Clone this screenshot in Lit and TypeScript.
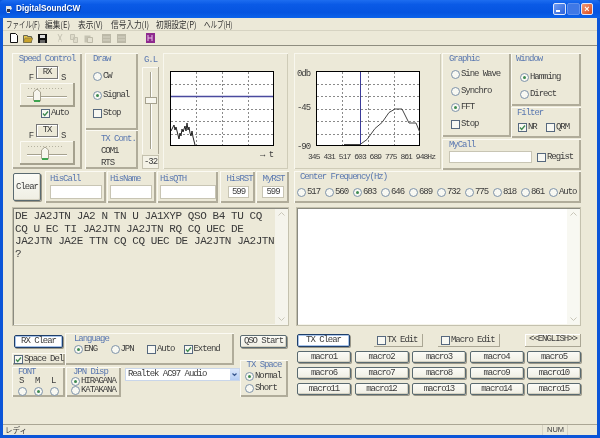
import { LitElement, html, css, svg } from "lit";
import { customElement } from "lit/decorators.js";

@customElement("app-root")
export class AppRoot extends LitElement {
  static styles = css`
    :host { display: block; width: 600px; height: 438px; overflow: hidden; }
    * { box-sizing: border-box; }
    .win { width: 600px; height: 438px; display: flex; flex-direction: column; background: #0b55d8; padding: 0 3px 3px; font: 9px/9px "Liberation Mono", monospace; letter-spacing: -1.05px; color: #3c3c3c; filter: blur(.3px); }
    .title { height: 18px; flex: none; margin: 0 -3px; padding: 0 5px; display: flex; align-items: center; border-radius: 4px 4px 0 0; color: #fff; font: bold 8.2px/18px "Liberation Sans", sans-serif; letter-spacing: 0; background: linear-gradient(#1d6df0, #0a5ae6 25%, #0554e0 70%, #0c63ea); }
    .title svg { margin-right: 3px; }
    .title .name { flex: 1; text-shadow: 1px 1px #0a3a9a; }
    .wb { width: 13px; height: 12px; margin-left: 1px; border-radius: 2px; border: 1px solid #dfe8fb; background: linear-gradient(135deg, #6f9cf2, #2a62dc); position: relative; }
    .wb.dim { background: #3f78e6; border-color: #5f90ee; }
    .wb.min::after { content: ""; position: absolute; left: 2px; bottom: 2px; width: 4px; height: 2px; background: #fff; }
    .wb.close { width: 12px; margin-right: 2px; background: linear-gradient(135deg, #f09a78, #dc4a1c); color: #fff; font: bold 9px/10px "Liberation Sans", sans-serif; text-align: center; letter-spacing: 0; }
    .menu { height: 13px; flex: none; background: #ece9d8; display: flex; padding: 1px 0 0 3px; border-bottom: 1px solid #d6d3c2; font: 9px/11px "Noto Sans CJK JP", sans-serif; letter-spacing: 0; color: #333; white-space: nowrap; }
    .menu span { transform: scaleX(.85); transform-origin: left center; }
    .menu span.kana { transform: scaleX(.72); }
    .mi1 { width: 39px; } .mi2 { width: 33px; } .mi3 { width: 33px; } .mi4 { width: 45px; } .mi5 { width: 48px; }
    .tools { height: 15px; flex: none; background: #ece9d8; border-bottom: 1px solid #8f8d80; display: flex; align-items: center; padding-left: 7px; }
    .tools svg { flex: none; display: block; }
    .g1 { margin-left: 5px; } .g2 { margin-left: 9px; } .g3 { margin-left: 6px; } .g4 { margin-left: 20px; }
    .client { flex: 1; background: #ece9d8; padding: 7px 0 0 9px; display: flex; gap: 5px; min-height: 0; }
    .col { display: flex; flex-direction: column; }
    .left { width: 277px; } .right { width: 287px; }
    .row { display: flex; }
    .p { background: #ece9d8; box-shadow: inset 1px 1px #fbfaf3, inset -2px -2px #b0ac9a; flex: none; }
    .t { color: #5a78b0; display: block; line-height: 9px; }
    .tc { text-align: center; }
    .top { height: 116px; }
    .speed { width: 70px; padding-top: 2px; }
    .lbl { display: flex; justify-content: center; align-items: flex-end; height: 13px; margin-top: 2px; }
    .lbl span { margin-bottom: -4px; font-size: 9px; }
    .lbl b { font-weight: normal; width: 22px; height: 13px; margin: 0 3px; line-height: 11px; text-align: center; border: 1px solid #777; box-shadow: inset 1px 1px #fff, 1px 1px #fff; }
    .slider { display: block; margin: 4px 0 0 8px; }
    .auto { margin: 2px 0 0 29px; }
    .lbl2 { margin-top: 6px; }
    .drawcol { width: 53px; margin-left: 3px; }
    .draw { height: 77px; padding: 2px 0 0 8px; }
    .draw .t { margin-bottom: 8px; }
    .draw .opt { margin-bottom: 9.5px; }
    .txc { height: 39px; padding: 2px 0 0 8px; }
    .txc span { display: block; margin: 3px 0 0 8px; }
    .gl { width: 17px; margin-left: 4px; display: flex; flex-direction: column; }
    .gl .t { text-align: center; margin: 3px 0 2px; }
    .gl svg { display: block; }
    .glv { width: 17px; height: 14px; margin-top: 1px; background: #f4f2e6; border: 1px solid #c4c1ae; line-height: 12px; text-align: center; }
    .plotp { width: 125px; margin-left: 4px; padding: 18px 0 0 7px; box-shadow: inset 1px 1px #f8f7ee, inset -1px -1px #cfccb8; }
    .plotp svg, .fftp svg { display: block; }
    .arrow { text-align: right; padding-right: 15px; margin-top: 5px; font-size: 9px; }
    .info { height: 32px; margin-top: 2px; }
    .clearwrap { width: 32px; padding: 2px 0 0 1px; box-shadow: none; }
    .clear { width: 28px; height: 28px; display: flex; align-items: center; justify-content: center; }
    .btn { border: 1px solid #5a6a70; border-radius: 2px; background: linear-gradient(#fbfbf6, #efeee3); box-shadow: 1px 1px #9a9788, inset -1px -1px #d5d2c2; color: #3c3c3c; text-align: center; line-height: 10px; flex: none; }
    .focus { border-color: #1f3f6a; background: #fff; box-shadow: inset 0 0 0 1px #a8c4ea, 1px 1px #9a9788; }
    .ib { padding: 2px 0 0 6px; }
    .ib .t { margin: 2px 0 1px; white-space: nowrap; }
    .ib .tc { margin-left: -4px; }
    .in { background: #fff; border: 1px solid #c8c5b4; display: block; }
    .hc { width: 61px; margin-left: 1px; padding-left: 5px; } .hc .in { width: 52px; height: 14px; }
    .hn { width: 49px; margin-left: 1px; padding-left: 3px; } .hn .in { width: 42px; height: 14px; }
    .hq { width: 61px; margin-left: 1px; padding-left: 3px; } .hq .in { width: 56px; height: 14px; }
    .hr { width: 35px; margin-left: 2px; padding-left: 8px; } .hr .in { width: 21px; height: 12px; margin-top: 2px; text-align: center; line-height: 10px; }
    .mr { width: 33px; margin-left: 1px; padding-left: 6px; } .mr .in { width: 22px; height: 12px; margin-top: 2px; text-align: center; line-height: 10px; }
    .box { height: 119px; margin-top: 4px; border: 1px solid #c4c1ae; display: flex; flex: none; box-shadow: inset 1px 1px #8a8a80, inset -1px -1px #f6f5ec; padding: 1px; }
    .box.l { background: #ece9d8; }
    .box.r { background: #fff; margin-left: 2px; width: 285px; }
    .txt { flex: 1; padding: 1px 0 0 1px; font-size: 11px; line-height: 12.6px; letter-spacing: -.43px; color: #3a3a3a; white-space: pre; }
    .sb { width: 12px; display: flex; flex-direction: column; justify-content: space-between; align-items: center; padding: 3px 0; }
    .box.l .sb { background: #f5f4ec; } .box.r .sb { background: #f8f8f2; }
    .bot { margin-top: 7px; display: flex; }
    .bl { width: 228px; }
    .blt { display: flex; height: 32px; }
    .a { width: 53px; display: flex; flex-direction: column; }
    .rx { width: 49px; height: 13px; margin: 2px 0 0 2px; }
    .sd { height: 12px; margin-top: 5px; padding: 2px 0 0 2px; }
    .lang { width: 169px; padding: 1px 0 0 9px; }
    .lang .t { margin: 1px 0 1px; }
    .lang .row .opt { width: 36.5px; }
    .blb { display: flex; margin-top: 2px; }
    .font { width: 53px; height: 30px; padding: 1px 0 0 6px; }
    .fg { display: grid; grid-template-columns: repeat(3, 16px); justify-items: start; }
    .fg span { padding-left: 1px; line-height: 8px; }
    .fg .radio { margin-top: 2px; }
    .jp { width: 55px; height: 30px; margin-left: 1px; padding: 1px 0 0 5px; }
    .jp .t { padding-left: 2px; }
    .combo { width: 116px; height: 13px; margin: 1px 0 0 4px; background: #fff; border: 1px solid #c9d6ea; display: flex; justify-content: space-between; padding-left: 2px; line-height: 11px; }
    .combo i { width: 9px; background: linear-gradient(#dbe7fb, #b4cdf4); display: flex; align-items: center; justify-content: center; }
    .br { width: 48px; }
    .qso { width: 47px; height: 13px; margin-top: 2px; }
    .txs { height: 37px; margin-top: 12px; padding: 1px 0 0 5px; }
    .txs .t { text-align: center; margin: 0 0 2px -5px; }
    .txs .opt { margin-bottom: 3px; }
    .fftp { width: 147px; padding-top: 18px; box-shadow: inset 1px 1px #f8f7ee, inset -1px -1px #cfccb8; }
    .yax { width: 22px; margin-top: -1px; padding-left: 3px; display: flex; flex-direction: column; }
    .yax span:nth-child(2) { margin-top: 25px; }
    .yax span:nth-child(3) { margin-top: 30px; }
    .xax { margin: 0 0 0 14px; font-size: 8px; letter-spacing: -.95px; white-space: nowrap; }
    .cl { width: 139px; margin-left: 1px; }
    .gr { width: 69px; height: 84px; padding: 2px 0 0 7px; }
    .gr .t { margin-bottom: 6px; }
    .gr .opt { margin: 0 0 7.6px 2px; }
    .wincol { width: 70px; }
    .w { height: 53px; padding: 2px 0 0 5px; }
    .w .t { margin-bottom: 9px; }
    .w .opt { margin: 0 0 8px 4px; }
    .fl { height: 31px; margin-top: 1px; padding: 2px 0 0 6px; }
    .fl .row { margin-top: 5px; }
    .fl .opt { width: 27px; margin-left: 1px; }
    .mc { height: 31px; margin-top: 1px; padding: 2px 0 0 7px; }
    .mc .t { margin-bottom: -1px; }
    .mc .row { align-items: center; }
    .mc .in { width: 83px; height: 12px; margin: 2px 5px 0 0; }
    .mc .opt { margin-top: 3px; }
    .cf { height: 32px; margin-top: 2px; padding: 2px 0 0 3px; width: 287px; }
    .cf .t { margin: 0 0 6px 3px; }
    .cf .opt { width: 28px; }
    .rb1 { margin: 8px 0 0 3px; height: 12px; align-items: center; }
    .tx { width: 53px; height: 13px; }
    .te { width: 49px; height: 13px; margin-left: 24px; padding-left: 3px; display: flex; align-items: center; box-shadow: inset -1px -1px #aaa694; }
    .me { width: 62px; height: 13px; margin-left: 15px; padding-left: 3px; display: flex; align-items: center; box-shadow: inset -1px -1px #aaa694; }
    .en { width: 56px; height: 13px; margin-left: 25px; line-height: 11px; text-align: center; box-shadow: inset -1px -1px #aaa694, inset 1px 1px #fff; }
    .macros { display: grid; grid-template-columns: repeat(5, 1fr); column-gap: 3.5px; row-gap: 4px; margin: 5px 0 0 3px; width: 284px; }
    .macros .btn { height: 12px; }
    .status { height: 11px; flex: none; margin-top: auto; background: #ece9d8; border-top: 1px solid #aaa694; display: flex; font: 7.5px/10px "Noto Sans CJK JP", sans-serif; letter-spacing: 0; padding-left: 2px; }
    .status .rd { width: 537px; }
    .status .c { width: 25px; border-left: 1px solid #d5d2c2; font: 7.5px/10px "Liberation Sans", sans-serif; padding-left: 4px; }
    .status .d { width: 20px; border-left: 1px solid #d5d2c2; }
    .clientwrap { flex: 1; display: flex; flex-direction: column; background: #ece9d8; min-height: 0; }
    .opt { display: flex; align-items: center; white-space: nowrap; height: 9px; }
    .radio { flex: none; display: inline-block; width: 9px; height: 9px; border-radius: 50%; border: 1px solid #7d92a8; background: #f8f8f2; margin-right: 1px; position: relative; }
    .radio.on::after { content: ""; position: absolute; left: 2px; top: 2px; width: 3px; height: 3px; border-radius: 50%; background: #3e8a50; }
    .chk { flex: none; display: inline-block; width: 9px; height: 9px; border: 1px solid #56687e; background: #f8f8f2; margin-right: 1px; position: relative; }
    .chk svg { position: absolute; left: 0; top: 0; }
    .arr { display: block; }
  `;

  private radio(label: string, on = false) {
    return html`<span class="opt"><i class="radio ${on ? "on" : ""}"></i>${label}</span>`;
  }
  private check(label: string, on = false) {
    return html`<span class="opt"><i class="chk">${on ? html`<svg width="7" height="7" viewBox="0 0 7 7"><path d="M1 3.500l1.700 2L6 1.500" fill="none" stroke="#3e8a50" stroke-width="1.3"/></svg>` : ""}</i>${label}</span>`;
  }
  private slider(x: number) {
    return html`<svg class="slider" width="55" height="24" viewBox="0 0 55 24">
      <rect width="55" height="24" fill="#ece9d8"/>
      <path d="M.5 23.500V.5H54" stroke="#fbfaf3" fill="none"/>
      <path d="M54 0V23H0" stroke="#a5a18e" stroke-width="2" fill="none"/>
      <path d="M8 5.500H44" stroke="#b5b2a0" stroke-dasharray="1 2"/>
      <path d="M7 13.500H47" stroke="#a5a18e"/><path d="M7 14.500H47" stroke="#fff"/>
      <path d="M${x - 3.5} 17.500V9l3.500-3 3.500 3v9z" fill="#f7f6ee" stroke="#a5a18e"/>
      <rect x="${x - 3}" y="17" width="6" height="2" fill="#3ea34f"/>
    </svg>`;
  }
  private grid(w: number, h: number) {
    const v = [0.25, 0.5, 0.75].map((f) => Math.round(w * f) + 0.5);
    const r = [1, 2, 3, 4, 5].map((i) => Math.round((h * i) / 6) + 0.5);
    return svg`
      <rect x=".5" y=".5" width="${w - 1}" height="${h - 1}" fill="#fff" stroke="#000"/>
      ${v.map((x) => svg`<path d="M${x} 1V${h - 1}" stroke="#8a8a8a" stroke-dasharray="2 2"/>`)}
      ${r.map((y) => svg`<path d="M1 ${y}H${w - 1}" stroke="#8a8a8a" stroke-dasharray="2 2"/>`)}`;
  }
  private scroll() {
    return html`<div class="sb">
      <svg class="arr" width="7" height="4" viewBox="0 0 7 4"><path d="M.5 3.500l3-3 3 3" fill="none" stroke="#c9c6b8"/></svg>
      <svg class="arr" width="7" height="4" viewBox="0 0 7 4"><path d="M.5.5l3 3 3-3" fill="none" stroke="#c9c6b8"/></svg>
    </div>`;
  }

  render() {
    const freqs = ["517", "560", "603", "646", "689", "732", "775", "818", "861", "Auto"];
    const macros = Array.from({ length: 15 }, (_, i) => `macro${i + 1}`);
    const text = "DE JA2JTN JA2 N TN U JA1XYP QSO B4 TU CQ\nCQ U EC TI JA2JTN JA2JTN RQ CQ UEC DE\nJA2JTN JA2E TTN CQ CQ UEC DE JA2JTN JA2JTN\n?";
    return html`<div class="win">
      <div class="title">
        <svg width="8" height="9" viewBox="0 0 8 9"><path d="M1 1h5l1 3-2 1v3H2L1 5z" fill="#dfe4ea"/><path d="M2 4h3v3H2z" fill="#334"/></svg>
        <span class="name">DigitalSoundCW</span>
        <div class="wb min"></div><div class="wb dim"></div><div class="wb close">×</div>
      </div>
      <div class="menu">
        <span class="mi1 kana">ファイル(F)</span><span class="mi2">編集(E)</span><span class="mi3">表示(V)</span><span class="mi4">信号入力(I)</span><span class="mi5">初期設定(P)</span><span class="kana">ヘルプ(H)</span>
      </div>
      <div class="tools">
        <svg width="8" height="10" viewBox="0 0 8 10"><path d="M.5.5h5l2 2v7h-7z" fill="#fff" stroke="#111"/></svg>
        <svg class="g1" width="10" height="9" viewBox="0 0 10 9"><path d="M.5 1.500h4v1h4v6h-8z" fill="#e8c64a" stroke="#665"/><path d="M2 4h8L8 8.500H.5z" fill="#c9a32c" stroke="#665" stroke-width=".5"/></svg>
        <svg class="g1" width="9" height="9" viewBox="0 0 9 9"><rect width="9" height="9" fill="#111"/><rect x="2" y="1" width="5" height="3" fill="#ddd"/><rect x="2" y="6" width="5" height="3" fill="#666"/></svg>
        <svg class="g2" width="8" height="9" viewBox="0 0 8 9"><path d="M2 0l3 6M6 0L3 6M2 7h1M5 7h1" stroke="#c5c2b2" fill="none"/></svg>
        <svg class="g3" width="8" height="9" viewBox="0 0 8 9"><path d="M.5.5h4v5h-4zM3.500 3.500h4v5h-4z" fill="#dedbca" stroke="#c5c2b2"/></svg>
        <svg class="g3" width="9" height="9" viewBox="0 0 9 9"><path d="M.5 1.500h6v7h-6z" fill="#c5c2b2"/><path d="M3.500 3.500h5v5h-5z" fill="#e4e1d2" stroke="#bdbaa8"/></svg>
        <svg class="g2" width="9" height="9" viewBox="0 0 9 9"><rect width="9" height="9" fill="#bcb9a8"/><path d="M1 3h7M1 6h7" stroke="#d8d5c6"/></svg>
        <svg class="g3" width="9" height="9" viewBox="0 0 9 9"><rect width="9" height="9" fill="#bcb9a8"/><path d="M1 3h7M1 6h7" stroke="#d8d5c6"/></svg>
        <svg class="g4" width="9" height="10" viewBox="0 0 9 10"><rect width="9" height="10" fill="#8e2a8e"/><path d="M2 2v6M2 5h4M6 2v6" stroke="#e8c0e8"/></svg>
      </div>
      <div class="clientwrap">
        <div class="client">
          <div class="col left">
            <div class="row top">
              <div class="p speed">
                <span class="t tc">Speed Control</span>
                <div class="lbl"><span>F</span><b>RX</b><span>S</span></div>
                ${this.slider(17)}
                <div class="auto">${this.check("Auto", true)}</div>
                <div class="lbl lbl2"><span>F</span><b>TX</b><span>S</span></div>
                ${this.slider(25)}
              </div>
              <div class="col drawcol">
                <div class="p draw">
                  <span class="t">Draw</span>
                  ${this.radio("CW")}${this.radio("Signal", true)}${this.check("Stop")}
                </div>
                <div class="p txc"><span class="t">TX Cont.</span><span>COM1</span><span>RTS</span></div>
              </div>
              <div class="gl">
                <span class="t">G.L</span>
                <svg width="17" height="87" viewBox="0 0 17 87">
                  <path d="M.5 87V.5H16" stroke="#fbfaf3" fill="none"/><path d="M16.500 0V87" stroke="#aaa694" fill="none"/>
                  <path d="M8.500 5V82" stroke="#a5a18e"/><path d="M9.500 5V82" stroke="#fff"/>
                  <rect x="3.500" y="30.500" width="11" height="6" fill="#f7f6ee" stroke="#a5a18e"/>
                </svg>
                <div class="glv">-32</div>
              </div>
              <div class="p plotp">
                <svg width="104" height="75" viewBox="0 0 104 75">
                  ${this.grid(104, 75)}
                  <path d="M1 25.500H103" stroke="#4a4a9e" stroke-width="1.4"/>
                  <path d="M1 60l2-4 1-2 1 5 1-3 2 8 1 4 1-6 1 3 1-7 1 3 2-6 1 5 1-8 1 7 1-3 1 6 1 3 1-5 1 6 1 4 1 4" fill="none" stroke="#222"/>
                </svg>
                <div class="arrow">→ t</div>
              </div>
            </div>
            <div class="row info">
              <div class="p clearwrap"><div class="btn clear">Clear</div></div>
              <div class="p ib hc"><span class="t">HisCall</span><span class="in"></span></div>
              <div class="p ib hn"><span class="t">HisName</span><span class="in"></span></div>
              <div class="p ib hq"><span class="t">HisQTH</span><span class="in"></span></div>
              <div class="p ib hr"><span class="t tc">HisRST</span><span class="in">599</span></div>
              <div class="p ib mr"><span class="t tc">MyRST</span><span class="in">599</span></div>
            </div>
            <div class="box l"><div class="txt">${text}</div>${this.scroll()}</div>
            <div class="bot">
              <div class="bl">
                <div class="blt">
                  <div class="a">
                    <div class="btn focus rx">RX Clear</div>
                    <div class="p sd">${this.check("Space Del", true)}</div>
                  </div>
                  <div class="p lang">
                    <span class="t">Language</span>
                    <div class="row">${this.radio("ENG", true)}${this.radio("JPN")}${this.check("Auto")}${this.check("Extend", true)}</div>
                  </div>
                </div>
                <div class="blb">
                  <div class="p font">
                    <span class="t">FONT</span>
                    <div class="fg"><span>S</span><span>M</span><span>L</span><i class="radio"></i><i class="radio on"></i><i class="radio"></i></div>
                  </div>
                  <div class="p jp">
                    <span class="t">JPN Disp</span>
                    ${this.radio("HIRAGANA", true)}${this.radio("KATAKANA")}
                  </div>
                  <div class="combo"><span>Realtek AC97 Audio</span><i><svg width="5" height="4" viewBox="0 0 5 4"><path d="M.5.5l2 2 2-2" fill="none" stroke="#36568e" stroke-width="1.2"/></svg></i></div>
                </div>
              </div>
              <div class="br">
                <div class="btn qso">QSO Start</div>
                <div class="p txs">
                  <span class="t">TX Space</span>
                  ${this.radio("Normal", true)}${this.radio("Short")}
                </div>
              </div>
            </div>
          </div>
          <div class="col right">
            <div class="row top">
              <div class="p fftp">
                <div class="row">
                  <div class="yax"><span>0db</span><span>-45</span><span>-90</span></div>
                  <svg width="104" height="75" viewBox="0 0 104 75">
                    ${this.grid(104, 75)}
                    <path d="M44.500 1V74" stroke="#3a3a9a"/>
                    <path d="M28 73.500H44l7-5 8-11 7-6 7-10 6-3.500h7l7 14h7l7 17" fill="none" stroke="#444"/>
                  </svg>
                </div>
                <div class="xax">345 431 517 603 689 775 861 948Hz</div>
              </div>
              <div class="col cl">
                <div class="row">
                  <div class="p gr">
                    <span class="t">Graphic</span>
                    ${this.radio("Sine Wave")}${this.radio("Synchro")}${this.radio("FFT", true)}${this.check("Stop")}
                  </div>
                  <div class="col wincol">
                    <div class="p w">
                      <span class="t">Window</span>
                      ${this.radio("Hamming", true)}${this.radio("Direct")}
                    </div>
                    <div class="p fl">
                      <span class="t">Filter</span>
                      <div class="row">${this.check("NR", true)}${this.check("QRM")}</div>
                    </div>
                  </div>
                </div>
                <div class="p mc">
                  <span class="t">MyCall</span>
                  <div class="row"><span class="in"></span>${this.check("Regist")}</div>
                </div>
              </div>
            </div>
            <div class="p cf">
              <span class="t">Center Frequency(Hz)</span>
              <div class="row">${freqs.map((f) => this.radio(f, f === "603"))}</div>
            </div>
            <div class="box r"><div class="txt"></div>${this.scroll()}</div>
            <div class="row rb1">
              <div class="btn focus tx">TX Clear</div>
              <div class="p te">${this.check("TX Edit")}</div>
              <div class="p me">${this.check("Macro Edit")}</div>
              <div class="p en">&lt;&lt;ENGLISH&gt;&gt;</div>
            </div>
            <div class="macros">${macros.map((m) => html`<div class="btn">${m}</div>`)}</div>
          </div>
        </div>
        <div class="status"><span class="rd">レディ</span><span class="c">NUM</span><span class="d"></span></div>
      </div>
    </div>`;
  }
}
